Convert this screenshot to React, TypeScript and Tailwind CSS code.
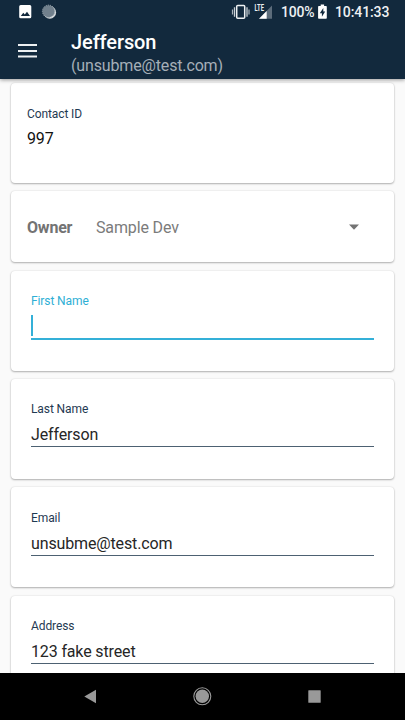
import type { ReactNode } from 'react';

function StatusBar() {
  return (
    <div className="flex h-6 w-full items-center text-[14px] leading-6 font-medium text-[#eef1f3]">
      <svg className="ml-[18px] h-6 w-[40px] shrink-0" viewBox="0 0 40 24">
        <path
          fillRule="evenodd"
          fill="#fff"
          d="M2.7 5h9.1a1.5 1.5 0 0 1 1.5 1.5v10.2a1.5 1.5 0 0 1-1.5 1.5H2.7a1.5 1.5 0 0 1-1.5-1.5V6.500a1.500 1.500 0 0 1 1.500-1.500zM2.800 15.900h9.200l-3-4.200-2.200 2.900-1.500-1.800z"
        />
        <circle cx="31.800" cy="12.400" r="6.300" fill="#d5dadd" />
        <circle cx="30.600" cy="11.300" r="6.100" fill="#71808d" />
        <circle cx="30.600" cy="11.300" r="6.200" fill="none" stroke="#a3adb5" strokeWidth="1" strokeDasharray="1 1" />
      </svg>
      <svg className="ml-[173px] h-6 w-[43px] shrink-0" viewBox="231 0 43 24">
        <rect x="236.700" y="5.400" width="8" height="12.900" rx="1" fill="none" stroke="#eef1f3" strokeWidth="1.500" />
        <path d="M234.500 7.200v9.600M247 7.200v9.600" stroke="#c9d0d5" strokeWidth="1.300" />
        <path d="M232.500 9.500v5M249 9.500v5" stroke="#aab4bc" strokeWidth="1.200" />
        <path d="M259 18.700L272 5.500v13.200z" fill="#5c6c7b" />
        <path d="M259 18.700l7.700-7.800v7.800z" fill="#fff" />
        <text x="254.600" y="11.300" fill="#eef1f3" fontFamily="Roboto, sans-serif" fontSize="9" fontWeight="700" textLength="9.400" lengthAdjust="spacingAndGlyphs">
          LTE
        </text>
      </svg>
      <span className="ml-[7px] w-[37px] tracking-[-0.2px]">100%</span>
      <svg className="h-6 w-[9px] shrink-0" viewBox="318 0 9 24">
        <path d="M320.700 4.600h3.400V6h1.900a.8.8 0 0 1 .8.800v11.100a.8.8 0 0 1-.8.800h-7.100a.8.8 0 0 1-.8-.8V6.800a.8.8 0 0 1 .8-.8h1.800z" fill="#fff" />
        <path d="M323.300 8.100l-3.500 5.100h2.100v3.500l3.300-5.100h-1.900z" fill="#12293d" />
      </svg>
      <span className="ml-[8px] tracking-[-0.1px]">10:41:33</span>
    </div>
  );
}

function Header() {
  return (
    <header className="relative z-10 h-[79px] shrink-0 bg-[#12293d] shadow-[0_1px_4px_rgba(0,0,0,0.4)]">
      <StatusBar />
      <div className="flex pt-[6px]">
        <svg className="ml-[18px] h-[42px] w-[53px] shrink-0" viewBox="0 0 53 42">
          <path d="M0 15.100h19M0 20.900h19M0 26.400h19" stroke="#edf0f2" strokeWidth="2" />
        </svg>
        <div>
          <h1 className="text-[20px] leading-6 font-medium tracking-[-0.1px] text-white">Jefferson</h1>
          <p className="mt-px text-[16px] leading-[22px] tracking-[-0.15px] text-[#a5afb8]">(unsubme@test.com)</p>
        </div>
      </div>
    </header>
  );
}

function Card({ className, children }: { className: string; children?: ReactNode }) {
  return (
    <section
      className={`mx-[11px] shrink-0 rounded-[4px] bg-white shadow-[0_1px_2px_rgba(0,0,0,0.28),0_0_2px_rgba(0,0,0,0.12)] ${className}`}
    >
      {children}
    </section>
  );
}

function Field({ label, value, className }: { label: string; value: string; className: string }) {
  return (
    <Card className={className}>
      <div className="mx-5 pt-[22.700px]">
        <div className="text-[12px] leading-4 tracking-[-0.1px] text-[#1f3a52]">{label}</div>
        <div className="mt-[7.700px] h-[22px] border-b border-[#4d6172] text-[16px] leading-5 tracking-[-0.14px] text-[#262626]">{value}</div>
      </div>
    </Card>
  );
}

export default function App() {
  return (
    <div className="flex h-[720px] w-[405px] flex-col overflow-hidden bg-[#fafafa] font-['Roboto',sans-serif]">
      <Header />
      <main className="flex min-h-0 flex-1 flex-col overflow-hidden">
        <Card className="mt-[4px] h-[99.500px]">
          <div className="pt-[23px] pl-4">
            <div className="text-[12px] leading-4 tracking-[-0.1px] text-[#1f3a52]">Contact ID</div>
            <div className="mt-[7px] text-[16px] leading-5 tracking-[-0.14px] text-[#111]">997</div>
          </div>
        </Card>
        <Card className="mt-[8.500px] flex h-[71px] items-center pl-4 text-[16px] text-[#7b7b7b]">
          <span className="w-[69px] pt-[2px] font-bold tracking-[-0.2px] text-[#737373]">Owner</span>
          <span className="pt-[2px] tracking-[-0.14px]">Sample Dev</span>
          <svg className="mr-[35px] ml-auto h-[6px] w-[10px]" viewBox="0 0 10 6">
            <path d="M0 .5h10L5 5.800z" fill="#737373" />
          </svg>
        </Card>
        <Card className="mt-[8.500px] h-[100px]">
          <div className="mx-5 pt-[22px]">
            <div className="text-[12px] leading-4 tracking-[-0.1px] text-[#2eafd5]">First Name</div>
            <div className="mt-[6px] flex h-[25px] items-start border-b-2 border-[#34b0d8]">
              <span className="h-[21px] w-[2px] bg-[#34b0d8]" />
            </div>
          </div>
        </Card>
        <Field className="mt-[8.300px] h-[100px]" label="Last Name" value="Jefferson" />
        <Field className="mt-[8.400px] h-[100px]" label="Email" value="unsubme@test.com" />
        <Field className="mt-[8.400px] h-[100px]" label="Address" value="123 fake street" />
      </main>
      <nav className="flex h-[47px] shrink-0 bg-black">
        <svg className="h-[47px] w-[405px]" viewBox="0 673 405 47">
          <path d="M84.300 696.600l11.700-6.900v13.600z" fill="#999" />
          <circle cx="202.300" cy="696.300" r="8.500" fill="none" stroke="#999" strokeWidth="1.100" />
          <circle cx="202.300" cy="696.300" r="6.700" fill="#999" />
          <rect x="308.300" y="690.200" width="12.400" height="12.600" rx=".6" fill="#999" />
        </svg>
      </nav>
    </div>
  );
}
